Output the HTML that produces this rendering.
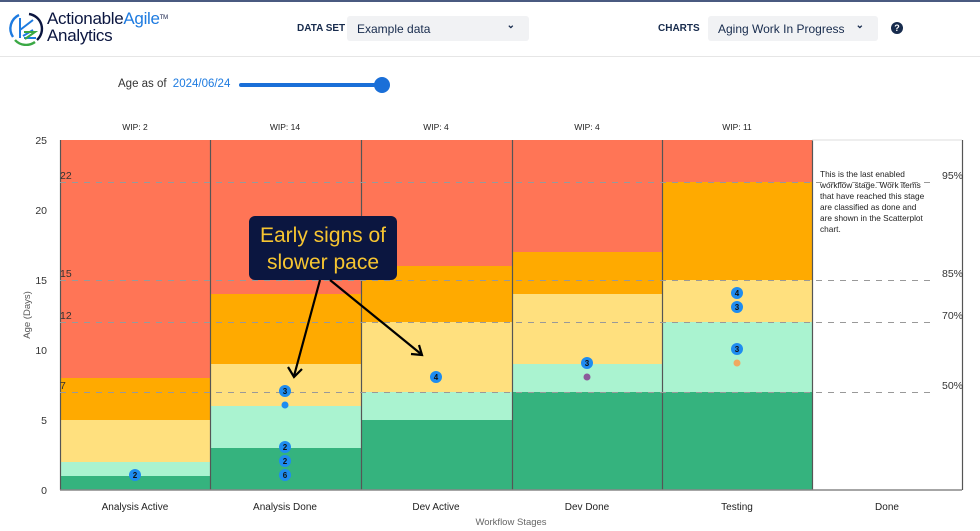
<!DOCTYPE html>
<html><head><meta charset="utf-8"><style>
*{margin:0;padding:0;box-sizing:border-box}
body{width:980px;height:531px;background:#fff;font-family:"Liberation Sans",Arial,sans-serif;overflow:hidden;position:relative}
.hdr{position:absolute;left:0;top:0;width:980px;height:57px;border-bottom:1px solid #e6e6e6;border-top:2px solid #4a5a80}
.lbl{position:absolute;font-size:10px;font-weight:bold;color:#172b4d;top:21px}
.sel{position:absolute;top:14px;height:25px;background:#f1f2f4;border-radius:3px;font-size:12px;color:#172b4d;padding:6px 0 0 10px}
.sel .ch{position:absolute;right:14px;top:4px;font-size:10px;font-weight:bold}
</style></head><body>
<div class="hdr">
  <svg style="position:absolute;left:7px;top:8px" width="38" height="36" viewBox="0 0 38 36">
    <path d="M22 4 A15 15 0 0 1 30 30" fill="none" stroke="#0b1640" stroke-width="2.4"/>
    <path d="M12 5 A15 15 0 0 0 6 27" fill="none" stroke="#1e7be0" stroke-width="2.4"/>
    <path d="M8 30 A15 15 0 0 0 28 32" fill="none" stroke="#3aa844" stroke-width="2.4"/>
    <path d="M13 8 L13 28 M13 20 L26 10 M16 26 L26 20 M17 28 L29 28" fill="none" stroke="#1e7be0" stroke-width="2"/>
    <path d="M17 22 L28 22 L18 29" fill="none" stroke="#3aa844" stroke-width="2"/>
  </svg>
  <div style="position:absolute;left:47px;top:8px;font-size:17px;line-height:17px;color:#0b1640;letter-spacing:-0.3px">Actionable<span style="color:#1e7be0">Agile</span><sup style="font-size:6px;vertical-align:top">TM</sup><br>Analytics</div>
  <div class="lbl" style="left:297px">DATA SET</div>
  <div class="sel" style="left:347px;width:182px">Example data<span class="ch">&#8964;</span></div>
  <div class="lbl" style="left:658px">CHARTS</div>
  <div class="sel" style="left:708px;width:170px">Aging Work In Progress<span class="ch">&#8964;</span></div>
  <div style="position:absolute;left:891px;top:20px;width:12px;height:12px;border-radius:50%;background:#172b4d;color:#fff;font-size:9px;font-weight:bold;text-align:center;line-height:12px">?</div>
</div>
<div style="position:absolute;left:118px;top:78px;font-size:11.5px;color:#333">Age as of <span style="color:#1e7be0;margin-left:3px">2024/06/24</span></div>
<div style="position:absolute;left:239px;top:83px;width:146px;height:4px;background:#1a6fd8;border-radius:2px"></div>
<div style="position:absolute;left:374px;top:77px;width:16px;height:16px;background:#1a6fd8;border-radius:50%"></div>

<svg style="position:absolute;left:0;top:0" width="980" height="531" font-family="Liberation Sans, Arial, sans-serif">
  <g font-size="8.5" fill="#222" text-anchor="middle">
    <text x="135" y="130">WIP: 2</text><text x="285" y="130">WIP: 14</text><text x="436" y="130">WIP: 4</text>
    <text x="587" y="130">WIP: 4</text><text x="737" y="130">WIP: 11</text>
  </g>
  <rect x="60" y="140" width="150" height="350" fill="#ff7556"/>
  <rect x="60" y="378" width="150" height="42" fill="#ffaa00"/>
  <rect x="60" y="420" width="150" height="42" fill="#ffe07e"/>
  <rect x="60" y="462" width="150" height="14" fill="#aaf3d0"/>
  <rect x="60" y="476" width="150" height="14" fill="#35b37e"/>
  <rect x="210" y="140" width="151" height="350" fill="#ff7556"/>
  <rect x="210" y="294" width="151" height="70" fill="#ffaa00"/>
  <rect x="210" y="364" width="151" height="42" fill="#ffe07e"/>
  <rect x="210" y="406" width="151" height="42" fill="#aaf3d0"/>
  <rect x="210" y="448" width="151" height="42" fill="#35b37e"/>
  <rect x="361" y="140" width="151" height="350" fill="#ff7556"/>
  <rect x="361" y="266" width="151" height="56" fill="#ffaa00"/>
  <rect x="361" y="322" width="151" height="70" fill="#ffe07e"/>
  <rect x="361" y="392" width="151" height="28" fill="#aaf3d0"/>
  <rect x="361" y="420" width="151" height="70" fill="#35b37e"/>
  <rect x="512" y="140" width="150" height="350" fill="#ff7556"/>
  <rect x="512" y="252" width="150" height="42" fill="#ffaa00"/>
  <rect x="512" y="294" width="150" height="70" fill="#ffe07e"/>
  <rect x="512" y="364" width="150" height="28" fill="#aaf3d0"/>
  <rect x="512" y="392" width="150" height="98" fill="#35b37e"/>
  <rect x="662" y="140" width="150" height="350" fill="#ff7556"/>
  <rect x="662" y="182" width="150" height="98" fill="#ffaa00"/>
  <rect x="662" y="280" width="150" height="42" fill="#ffe07e"/>
  <rect x="662" y="322" width="150" height="70" fill="#aaf3d0"/>
  <rect x="662" y="392" width="150" height="98" fill="#35b37e"/>
  <g stroke="#555" stroke-width="1.2">
    <line x1="60.5" y1="140" x2="60.5" y2="490"/><line x1="210.5" y1="140" x2="210.5" y2="490"/>
    <line x1="361.5" y1="140" x2="361.5" y2="490"/><line x1="512.5" y1="140" x2="512.5" y2="490"/>
    <line x1="662.5" y1="140" x2="662.5" y2="490"/><line x1="812.5" y1="140" x2="812.5" y2="490"/>
    <line x1="962.5" y1="140" x2="962.5" y2="490"/>
  </g>
  <line x1="60" y1="490" x2="962" y2="490" stroke="#888" stroke-width="1.5"/>
  <line x1="812" y1="140" x2="962" y2="140" stroke="#ddd"/>
  <g stroke="#999" stroke-dasharray="6,6" stroke-width="1">
    <line x1="60" y1="182.5" x2="935" y2="182.5"/><line x1="60" y1="280.5" x2="935" y2="280.5"/>
    <line x1="60" y1="322.5" x2="935" y2="322.5"/><line x1="60" y1="392.5" x2="935" y2="392.5"/>
  </g>
  <g font-size="10.5" fill="#333">
    <text x="942" y="179">95%</text><text x="942" y="277">85%</text><text x="942" y="319">70%</text><text x="942" y="389">50%</text>
    <text x="60" y="179">22</text><text x="60" y="277">15</text><text x="60" y="319">12</text><text x="60" y="389">7</text>
  </g>
  <g font-size="10.5" fill="#333" text-anchor="end">
    <text x="47" y="144">25</text><text x="47" y="214">20</text><text x="47" y="284">15</text>
    <text x="47" y="354">10</text><text x="47" y="424">5</text><text x="47" y="494">0</text>
  </g>
  <text transform="translate(30,315) rotate(-90)" font-size="9.5" fill="#555" text-anchor="middle">Age (Days)</text>
  <g font-size="8.3" fill="#222">
    <text x="820" y="177">This is the last enabled</text><text x="820" y="188">workflow stage. Work items</text>
    <text x="820" y="199">that have reached this stage</text><text x="820" y="210">are classified as done and</text>
    <text x="820" y="221">are shown in the Scatterplot</text><text x="820" y="232">chart.</text>
  </g>
  <g font-size="10" fill="#222" text-anchor="middle">
    <text x="135" y="510">Analysis Active</text><text x="285" y="510">Analysis Done</text><text x="436" y="510">Dev Active</text>
    <text x="587" y="510">Dev Done</text><text x="737" y="510">Testing</text><text x="887" y="510">Done</text>
  </g>
  <text x="511" y="525" font-size="9.5" fill="#666" text-anchor="middle">Workflow Stages</text>
  <g fill="#1e8cf0">
    <circle cx="135" cy="475" r="6"/><circle cx="285" cy="391" r="6"/><circle cx="285" cy="405" r="3.5"/>
    <circle cx="285" cy="447" r="6"/><circle cx="285" cy="461" r="6"/><circle cx="285" cy="475" r="6"/>
    <circle cx="436" cy="377" r="6"/><circle cx="587" cy="363" r="6"/>
    <circle cx="737" cy="293" r="6"/><circle cx="737" cy="307" r="6"/><circle cx="737" cy="349" r="6"/>
  </g>
  <circle cx="587" cy="377" r="3.5" fill="#8b5a9a"/>
  <circle cx="737" cy="363" r="3.5" fill="#f0a860"/>
  <g font-size="8" font-weight="bold" fill="#111" text-anchor="middle">
    <text x="135" y="478">2</text><text x="285" y="394">3</text><text x="285" y="450">2</text><text x="285" y="464">2</text>
    <text x="285" y="478">6</text><text x="436" y="380">4</text><text x="587" y="366">3</text>
    <text x="737" y="296">4</text><text x="737" y="310">3</text><text x="737" y="352">3</text>
  </g>
  <rect x="249" y="216" width="148" height="64" rx="6" fill="#0b1640"/>
  <g font-size="21" fill="#f7c531" text-anchor="middle">
    <text x="323" y="242">Early signs of</text><text x="323" y="269">slower pace</text>
  </g>
  <g stroke="#000" stroke-width="2.2" fill="none">
    <line x1="320" y1="280" x2="294" y2="376"/>
    <path d="M288 367 L294 377 L302 369"/>
    <line x1="330" y1="280" x2="421" y2="354"/>
    <path d="M411 354 L422 355 L419 345"/>
  </g>
</svg>
</body></html>
